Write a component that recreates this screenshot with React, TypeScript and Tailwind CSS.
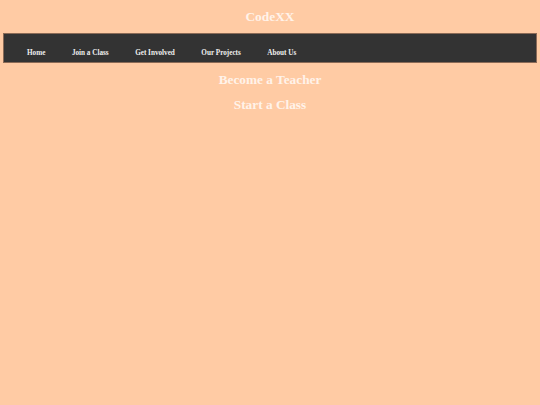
export default function App() {
  const links = ["Home", "Join a Class", "Get Involved", "Our Projects", "About Us"];

  return (
    <div className="min-h-screen bg-[#ffcba4] font-['Liberation_Serif','Times_New_Roman',serif]">
      {/* HEADER */}
      <header className="pt-[9px] text-center">
        <h1 className="text-[13.4px] leading-[15px] font-bold text-[#fff3ea]">CodeXX</h1>
      </header>

      {/* NAV */}
      <nav className="mx-[3px] mt-[9px] h-[30px] border border-[#8a6a56] bg-[#333333]">
        <ul className="flex gap-[26.5px] pl-[23px] pt-[14.5px] text-[7.2px] leading-[8px] font-bold text-[#eeeeee]">
          {links.map((link) => (
            <li key={link}>
              <a href="#">{link}</a>
            </li>
          ))}
        </ul>
      </nav>

      {/* CONTENT */}
      <main className="flex flex-col items-center gap-[10px] pt-[8.5px] text-[13.3px] leading-[15px] font-bold text-[#fff3ea]">
        <h2>Become a Teacher</h2>
        <h2>Start a Class</h2>
      </main>
    </div>
  );
}
